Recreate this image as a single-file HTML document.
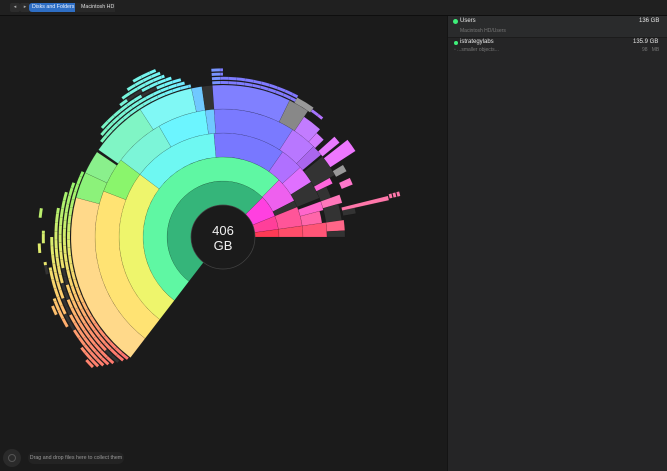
<!DOCTYPE html>
<html><head><meta charset="utf-8">
<style>
html,body{margin:0;padding:0;width:667px;height:471px;overflow:hidden;background:#1b1b1b;font-family:"Liberation Sans",sans-serif;}
#top{position:absolute;left:0;top:0;width:667px;height:15px;background:#202020;border-bottom:1px solid #0e0e0e;}
.nav{position:absolute;top:3px;height:9px;width:10px;background:#2c2c2c;border-radius:2px;color:#aaa;font-size:5px;line-height:9px;text-align:center;}
#bc1{position:absolute;left:29px;top:3px;height:9px;width:46px;background:#2e6ec4;border-radius:3px 0 0 3px;color:#e8f0ff;font-size:5.3px;line-height:9px;padding-left:3px;box-sizing:border-box;}
#bc1:after{content:"";position:absolute;right:-4px;top:0;border-left:4px solid #2e6ec4;border-top:4.5px solid transparent;border-bottom:4.5px solid transparent;}
#bc2{position:absolute;left:75px;top:3px;height:9px;width:40px;background:#282828;color:#ddd;font-size:5.3px;line-height:9px;padding-left:6px;box-sizing:border-box;}
#panel{position:absolute;left:447px;top:16px;width:220px;height:455px;background:#252526;border-left:1px solid #141414;}
#row1{position:absolute;left:0;top:0;width:220px;height:21px;background:#2a2b2c;border-bottom:1px solid #1c1c1c;}
.t{position:absolute;font-size:6px;color:#e6e6e6;white-space:nowrap;}
.g{color:#777;font-size:5px;}
.dot{position:absolute;border-radius:50%;background:#3ef07a;}
#drop{position:absolute;left:28px;top:452px;width:96px;height:12px;background:#232323;border-radius:6px;color:#999;font-size:5.3px;line-height:12px;text-align:center;}
#ic{position:absolute;left:3px;top:449px;width:18px;height:18px;border-radius:50%;background:#2a2a2a;}
#ic:after{content:"";position:absolute;left:5px;top:5px;width:6px;height:6px;border-radius:50%;border:1px solid #555;}
svg{position:absolute;left:0;top:0;}
</style></head><body>
<svg id="s" width="447" height="471" viewBox="0 0 447 471"></svg>
<div id="top">
 <div class="nav" style="left:10px">◂</div><div class="nav" style="left:20px">▸</div>
 <div id="bc1">Disks and Folders</div><div id="bc2">Macintosh HD</div>
</div>
<div id="panel">
 <div id="row1"></div>
 <div class="dot" style="left:5px;top:3px;width:5px;height:5px"></div>
 <div class="t" style="left:12px;top:2px">Users</div>
 <div class="t" style="left:191px;top:2px">136 GB</div>
 <div class="t g" style="left:12px;top:12px">Macintosh HD/Users</div>
 <div class="dot" style="left:6px;top:25px;width:4px;height:4px"></div>
 <div class="t" style="left:12px;top:23px">istrategylabs</div>
 <div class="t" style="left:185px;top:23px">135.9 GB</div>
 <div class="t g" style="left:6px;top:31px">▫ ...smaller objects...</div>
 <div class="t g" style="left:194px;top:31px">98 &nbsp; MB</div>
</div>
<div id="ic"></div>
<div id="drop">Drag and drop files here to collect them</div>
<script>
var cx=223,cy=237,s=document.getElementById('s'),h='';
function P(r0,r1,a0,a1,c,st){var d=Math.PI/180,A0=a0*d,A1=a1*d,L=(a1-a0)>180?1:0;
function p(r,a){return (cx+r*Math.cos(a)).toFixed(2)+','+(cy+r*Math.sin(a)).toFixed(2);}
h+='<path d="M'+p(r0,A0)+'L'+p(r1,A0)+'A'+r1+','+r1+' 0 '+L+' 1 '+p(r1,A1)+'L'+p(r0,A1)+'A'+r0+','+r0+' 0 '+L+' 0 '+p(r0,A0)+'Z" fill="'+c+'" stroke="rgba(0,0,0,'+(st||0.22)+')" stroke-width="0.5"/>';}
var stops=[[127,[255,110,110]],[145,[255,150,110]],[160,[255,205,110]],[175,[230,235,110]],[190,[180,240,110]],[205,[140,245,110]],[220,[120,245,190]],[238,[120,245,225]],[252,[115,245,255]],[262,[110,200,255]],[270,[125,125,255]],[300,[130,120,255]],[310,[185,115,255]],[325,[230,110,255]],[338,[255,90,220]],[348,[255,100,160]],[361,[255,80,100]]];
function col(a){for(var i=0;i<stops.length-1;i++){if(a<=stops[i+1][0]){var t=(a-stops[i][0])/(stops[i+1][0]-stops[i][0]),c=stops[i][1],e=stops[i+1][1];return 'rgb('+[0,1,2].map(function(k){return Math.round(c[k]+(e[k]-c[k])*t)}).join(',')+')';}}return '#f66';}
var seg=[
[32,56,127.5,315,'#35b57a'],[32,56,315,338,'#ff40e0'],[32,56,338,352,'#ff3f9a'],[32,56,352,360,'#ff3a55'],
[56,80,127.5,314.5,'#5ff7a3'],[56,80,314.5,333,'#ee60ee'],[56,80,333,338,'#333'],[56,80,338,352,'#ff5599'],[56,80,352,360,'#ff4d6a'],
[80,104,127.5,217,'#eef56c'],[80,104,217,265,'#6ef8f2'],[80,104,265,305,'#7878ff'],[80,104,305,318,'#b070ff'],[80,104,318,328,'#e070ff'],[80,104,328,338,'#333'],[80,104,340,345,'#ff66cc'],[80,100,345,352,'#ff66aa'],[80,104,352,360,'#ff5577'],
[104,128,127.5,201,'#ffe373'],[104,128,201,217,'#8af56c'],[104,128,217,240,'#7cf5d8'],[104,128,240,262,'#6cf5ff'],[104,128,262,266,'#70c8ff'],[104,128,266,303,'#7a7aff'],[104,128,303,315,'#b877ff'],[104,128,315,320,'#aa66ee'],[104,128,321,331,'#333'],[104,122,331,334,'#ff66dd'],[104,115,334,340,'#333'],[104,124,340,344,'#ff77bb'],[104,120,344,352,'#333'],[104,122,352,357,'#ff6688'],[104,122,357,360,'#333'],
[128,152,127.5,195,'#ffd98a'],[128,152,195,205,'#8cf27a'],[128,152,205,214,'#8af08c'],[128,152,215,237,'#80f5c5'],[128,152,237,258,'#80f8f5'],[128,152,258,262,'#70c8ff'],[128,152,262,266,'#333'],[128,152,266,296,'#8080ff'],[128,152,296,304,'#888'],[128,145,304,312,'#c27cff'],[128,140,312,316,'#d27cff'],[128,150,318,321,'#e87aff'],[128,158,322,327,'#ee77ff'],[128,140,329,332,'#999'],[128,140,335,338,'#ff77cc'],[122,135,346,350,'#333'],[122,170,346,347.5,'#ff77aa']
];
seg.forEach(function(q){P(q[0],q[1],q[2],q[3],q[4]);});
var rings=[
[[128,205],[218,258],[266,300],[305,310]],
[[129,200],[220,256],[266,298]],
[[130,196],[222,255],[266,270]],
[[131,190],[232,252],[266,270]],
[[132,180],[234,250]],
[[133,170],[237,249]],
[[134,142],[150,160],[168,172],[178,182],[240,248]],
[[135,138],[155,158],[175,178],[186,189]]];
rings.forEach(function(rr,i){var r0=153+i*4.2,r1=r0+3;rr.forEach(function(g){for(var a=g[0];a<g[1];a+=3){var b=Math.min(a+3,g[1]);P(r0,r1,a,b,(i>1&&((a*7+i*13)%11<2))?'#333':col(a+1.5),0.1);}});});
P(152,158,298,305,'#999');P(171,174,345.5,347,'#ff77aa');P(175,178,345.5,347,'#ff77aa');P(179,182,345.5,347,'#ff77aa');
s.innerHTML=h+'<circle cx="'+cx+'" cy="'+cy+'" r="32" fill="#1b1b1b" stroke="#444" stroke-width="0.7"/><text x="'+cx+'" y="'+(cy-2)+'" fill="#eee" font-size="13" text-anchor="middle" font-family="Liberation Sans">406</text><text x="'+cx+'" y="'+(cy+13)+'" fill="#eee" font-size="13" text-anchor="middle" font-family="Liberation Sans">GB</text>';
</script>
</body></html>
